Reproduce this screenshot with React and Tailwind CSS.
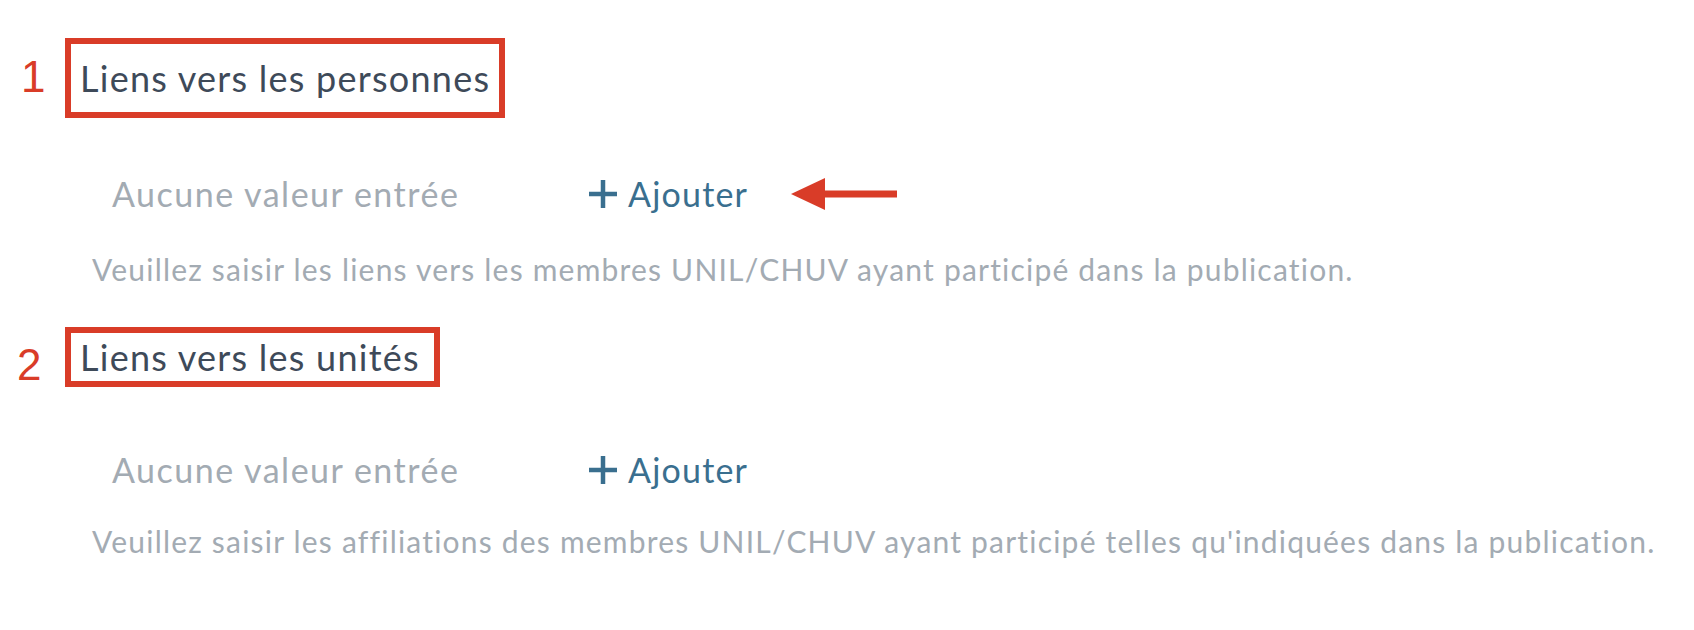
const FONT = { fontFamily: 'Lato, "Noto Sans", sans-serif' }

const SECTIONS = [
  {
    num: '1',
    titre: 'Liens vers les personnes',
    aide: 'Veuillez saisir les liens vers les membres UNIL/CHUV ayant participé dans la publication.',
    fleche: true,
  },
  {
    num: '2',
    titre: 'Liens vers les unités',
    aide: "Veuillez saisir les affiliations des membres UNIL/CHUV ayant participé telles qu'indiquées dans la publication.",
    fleche: false,
  },
]

const PlusIcon = () => (
  <svg width="30" height="30" viewBox="0 0 30 30" className="shrink-0">
    <path d="M15 1v28M1 15h28" stroke="#3a6f8f" strokeWidth="4.5" />
  </svg>
)

const Fleche = () => (
  <svg width="106" height="34" viewBox="0 0 106 34" className="shrink-0">
    <path d="M0 17L34 1v32z" fill="#d93c28" />
    <rect x="30" y="13.5" width="76" height="7" fill="#d93c28" />
  </svg>
)

const Section = ({ num, titre, aide, fleche, first }) => (
  <div className={first ? 'pt-[38px]' : 'pt-[40px]'}>
    {/* Titre encadré */}
    <div className="flex items-center">
      <span
        className={`w-[65px] font-['Liberation_Sans',Arial,sans-serif] text-[44px] leading-none text-[#d93c28] ${first ? 'pl-[21px] mb-[2px]' : 'pl-[17px] mt-[16px]'}`}
      >
        {num}
      </span>
      <div className={`border-[6px] border-[#d93c28] ${first ? 'pl-[9px] pr-[9px] py-[14px]' : 'pl-[9px] pr-[14px] py-[4px]'}`}>
        <h3 className="text-[36px] leading-[40px] tracking-[1.25px] text-[#3e4a59]">{titre}</h3>
      </div>
    </div>

    {/* Valeurs */}
    <div className={`flex items-center pl-[112px] ${first ? 'mt-[55px]' : 'mt-[62px]'}`}>
      <span className="w-[476px] text-[34px] leading-[41px] tracking-[1.5px] text-[#a3abb3]">Aucune valeur entrée</span>
      <button type="button" className="flex items-center gap-[10px] text-[34px] leading-[41px] tracking-[1.2px] text-[#3a6f8f]">
        <PlusIcon />
        Ajouter
      </button>
      {fleche && <span className="ml-[43px]"><Fleche /></span>}
    </div>

    {/* Aide */}
    <p className={`pl-[92px] text-[30px] leading-[36px] tracking-[1.2px] text-[#a3abb3] ${first ? 'mt-[37px]' : 'mt-[33px]'}`}>
      {aide}
    </p>
  </div>
)

export default function App() {
  return (
    <div className="w-[1694px] h-[630px] bg-white overflow-hidden" style={FONT}>
      {SECTIONS.map((s, i) => (
        <Section key={s.num} {...s} first={i === 0} />
      ))}
    </div>
  )
}
